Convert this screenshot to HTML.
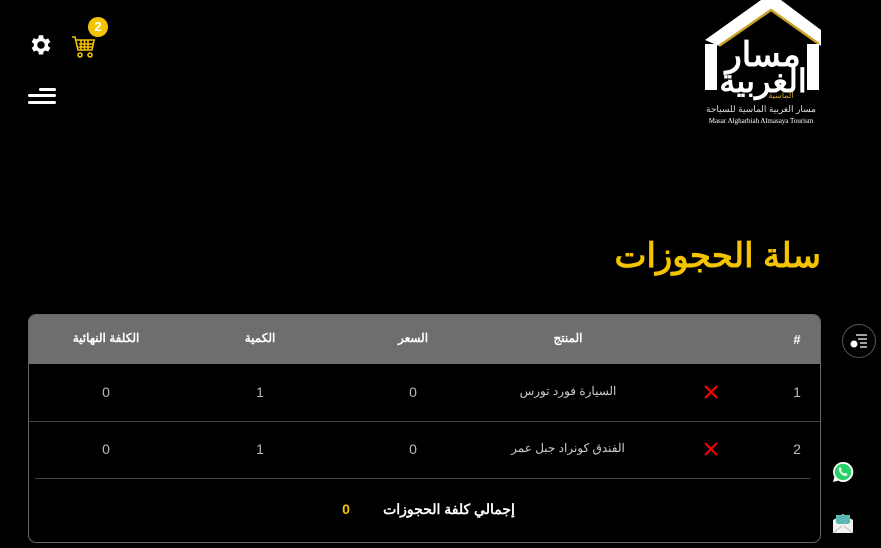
<!DOCTYPE html>
<html dir="ltr"><head><meta charset="utf-8"><style>
*{margin:0;padding:0;box-sizing:border-box}
body{width:881px;height:548px;background:#000;overflow:hidden;position:relative;font-family:"Liberation Sans","Noto Sans CJK SC",sans-serif;color:#fff}
.a{position:absolute}
.t{position:absolute;transform:translateX(-50%);white-space:nowrap}
</style></head><body>
<!-- gear -->
<svg class="a" style="left:27px;top:32px" width="26" height="26" viewBox="0 0 24 24"><path fill="#fff" d="M19.4 13a7.6 7.6 0 0 0 0-2l2.1-1.6-2-3.5-2.5 1a7.4 7.4 0 0 0-1.7-1L14.9 3h-4l-.4 2.7a7.4 7.4 0 0 0-1.7 1l-2.5-1-2 3.5L6.4 11a7.6 7.6 0 0 0 0 2l-2.1 1.6 2 3.5 2.5-1a7.4 7.4 0 0 0 1.7 1l.4 2.7h4l.4-2.7a7.4 7.4 0 0 0 1.7-1l2.5 1 2-3.5zM12.9 15.5a3.5 3.5 0 1 1 0-7 3.5 3.5 0 0 1 0 7z"/></svg>
<!-- cart -->
<svg class="a" style="left:71px;top:35px" width="26" height="24" viewBox="0 0 26 24" fill="none" stroke="#f5c400" stroke-width="1.6"><path d="M1 2h3l3 13h14l2-10H5"/><path d="M8 9h14M7.5 12h14M10 5v10M13.5 5v10M17 5v10"/><circle cx="9" cy="20" r="2"/><circle cx="19" cy="20" r="2"/></svg>
<div class="a" style="left:88px;top:17px;width:20px;height:20px;border-radius:50%;background:#f5c400;color:#fff;font-weight:bold;font-size:13px;text-align:center;line-height:20px">2</div>
<!-- menu -->
<div class="a" style="left:39px;top:88px;width:17px;height:3px;background:#fff;border-radius:2px"></div>
<div class="a" style="left:28px;top:94px;width:28px;height:3px;background:#fff;border-radius:2px"></div>
<div class="a" style="left:28px;top:101px;width:28px;height:3px;background:#fff;border-radius:2px"></div>
<!-- logo -->
<div class="a" style="left:701px;top:0;width:120px;height:127px;background:#000">
<svg width="120" height="127" viewBox="0 0 120 127"><path d="M4 40 L60 0 L80 0 L120 30 L120 46 L70 10 L18 46 Z" fill="#fff"/><path d="M18 46 L70 10 L118 44" stroke="#c9a227" stroke-width="2.5" fill="none"/><rect x="4" y="44" width="12" height="46" fill="#fff"/><rect x="106" y="44" width="12" height="46" fill="#fff"/>
<text x="62" y="66" font-family="Liberation Sans,Noto Sans CJK SC,sans-serif" font-size="34" font-weight="bold" fill="#fff" text-anchor="middle">مسار</text>
<text x="62" y="92" font-family="Liberation Sans,Noto Sans CJK SC,sans-serif" font-size="32" font-weight="bold" fill="#fff" text-anchor="middle">الغربية</text>
<text x="80" y="98" font-size="8" fill="#c9a227" text-anchor="middle" font-family="Liberation Sans,sans-serif">الماسية</text>
<text x="60" y="112" font-size="9" fill="#ddd" text-anchor="middle" font-family="Liberation Sans,sans-serif">مسار الغربية الماسية للسياحة</text>
<text x="60" y="123" font-size="7" fill="#fff" text-anchor="middle" font-family="Liberation Serif,serif">Masar Algharbiah Almasaya Tourism</text></svg></div>
<!-- title -->
<div class="a" style="right:60px;top:236px;font-size:34px;font-weight:bold;color:#f5c400;direction:rtl">سلة الحجوزات</div>
<!-- table -->
<div class="a" style="left:28px;top:314px;width:793px;height:229px;border:1px solid #666;border-radius:8px;overflow:hidden">
<div class="a" style="left:0;top:0;width:100%;height:49px;background:#6e6e6e"></div>
<div class="a" style="left:0;top:106px;width:100%;height:1px;background:#444"></div>
<div class="a" style="left:6px;top:163px;width:775px;height:1px;background:#444"></div>
</div>
<div style="font-size:12px;font-weight:bold">
<span class="t" style="left:797px;top:332px;font-size:13px">#</span>
<span class="t" style="left:568px;top:331px">المنتج</span>
<span class="t" style="left:413px;top:331px">السعر</span>
<span class="t" style="left:260px;top:331px">الكمية</span>
<span class="t" style="left:106px;top:331px">الكلفة النهائية</span>
</div>
<div style="font-size:14px;color:#bbb">
<span class="t" style="left:797px;top:384px">1</span>
<span class="t" style="left:797px;top:441px">2</span>
<span class="t" style="left:568px;top:384px;font-size:12px;color:#ccc">السيارة فورد تورس</span>
<span class="t" style="left:568px;top:441px;font-size:12px;color:#ccc">الفندق كونراد جبل عمر</span>
<span class="t" style="left:413px;top:384px">0</span><span class="t" style="left:413px;top:441px">0</span>
<span class="t" style="left:260px;top:384px">1</span><span class="t" style="left:260px;top:441px">1</span>
<span class="t" style="left:106px;top:384px">0</span><span class="t" style="left:106px;top:441px">0</span>
</div>
<svg class="a" style="left:704px;top:385px" width="14" height="14"><path d="M1 1L13 13M13 1L1 13" stroke="#f00" stroke-width="2"/></svg>
<svg class="a" style="left:704px;top:442px" width="14" height="14"><path d="M1 1L13 13M13 1L1 13" stroke="#f00" stroke-width="2"/></svg>
<span class="t" style="left:449px;top:501px;font-size:14px;font-weight:bold">إجمالي كلفة الحجوزات</span>
<span class="t" style="left:346px;top:501px;font-size:14px;font-weight:bold;color:#f5c400">0</span>
<!-- side buttons -->
<div class="a" style="left:842px;top:324px;width:34px;height:34px;border:1px solid #555;border-radius:50%"></div>
<svg class="a" style="left:849px;top:333px" width="20" height="16"><path d="M7 2h11M9 6h9M11 10h7M11 14h7" stroke="#fff" stroke-width="1.3"/><circle cx="5" cy="11" r="3.5" fill="#fff"/></svg>
<svg class="a" style="left:832px;top:461px" width="22" height="22" viewBox="0 0 22 22"><path d="M11 1a10 10 0 0 0-8.6 15L1 21l5.2-1.4A10 10 0 1 0 11 1z" fill="#fff"/><circle cx="11" cy="11" r="8.2" fill="#25d366"/><path d="M7.5 6.5c.5-.5 1-.4 1.3.2l.8 1.8c.1.4-.3.8-.6 1.1.6 1.3 1.7 2.4 3 3 .3-.3.7-.8 1.1-.6l1.8.8c.6.3.6.8.2 1.3-.8 1-2 1.2-3.5.4a9 9 0 0 1-4.3-4.3c-.7-1.5-.5-2.8.2-3.7z" fill="#fff"/></svg>
<svg class="a" style="left:832px;top:513px" width="22" height="20" viewBox="0 0 22 20"><path d="M1 7L11 1l10 6v13H1z" fill="#eee"/><rect x="4" y="2" width="14" height="9" fill="#5bb8b0"/><path d="M1 8l10 6 10-6v12H1z" fill="#f2f2f2"/><path d="M1 20l9-7M21 20l-9-7" stroke="#bbb" stroke-width="1"/></svg>
</body></html>
